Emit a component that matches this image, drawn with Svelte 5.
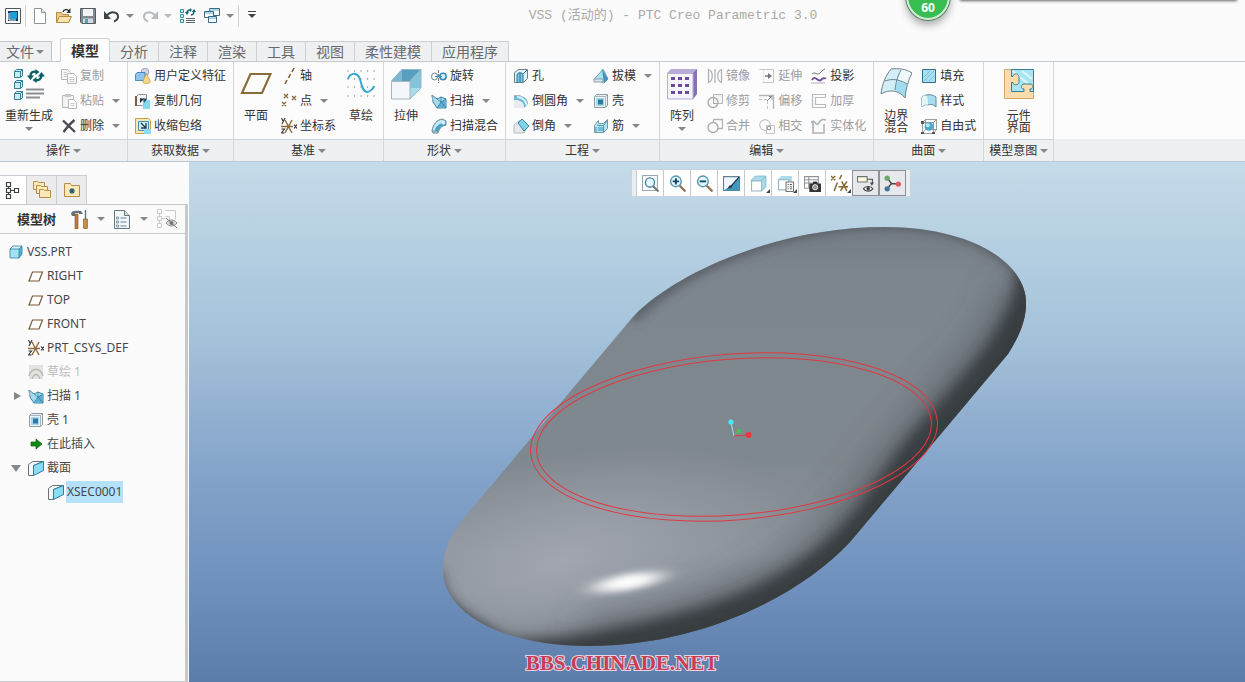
<script>
  const icons = {
    app: '<path d="M.5.5h15v15H.5z" fill="#fff" stroke="#4d5660"/><path d="M3 3h10v10H3z" fill="#173f66"/><path d="M6 4h6v6l-1 1H5V5z" fill="#1c9ed6"/><path d="M4 5v7h7" fill="none" stroke="#e8f6fc"/>',
    new: '<path d="M2.500.5h7l4 4v11h-11z" fill="#fff" stroke="#8c9298"/><path d="M9.500.5v4h4" fill="#e6e9eb" stroke="#8c9298"/>',
    open: '<path d="M.5 14.500v-10h5l1 2h6v8z" fill="#e9c98c" stroke="#b58b42"/><path d="M.5 14.500l3-6h12l-3 6z" fill="#fbe2ae" stroke="#b58b42"/><path d="M7 4c1-3 4-3 6-1" fill="none" stroke="#333" stroke-width="1.500"/><path d="M14.500 0v5h-4z" fill="#333"/>',
    save: '<path d="M.5.5h15v15H2l-1.500-1.500z" fill="#828a90" stroke="#565d63"/><path d="M3 1h10v7H3z" fill="#f1f3f4"/><path d="M3 10.500h10V15H3z" fill="#d5dade"/><path d="M5 11h3v4H5z" fill="#4aa4c6"/>',
    undo: '<path d="M3 7.500c4-5 11-3.500 11 1 0 2-1.500 4-4 5" fill="none" stroke="#3c4348" stroke-width="2"/><path d="M0 3v8h7z" fill="#3c4348"/>',
    redo: '<path d="M13 7.500c-4-5-11-3.500-11 1 0 2 1.500 4 4 5" fill="none" stroke="#b8bbbd" stroke-width="2"/><path d="M16 3v8H9z" fill="#b8bbbd"/>',
    regen: '<g fill="#d9f1f8" stroke="#3e8dab"><path d="M.5 1.500h3v3h-3zM.5 6.500h3v3h-3zM.5 11.500h3v3h-3z"/></g><path d="M6 10.500h9M6 12.500h9M6 14.500h9" stroke="#5d666d"/><path d="M7 5c0-3 2-3 3-3M14 3c0 3-2 4-3 4" fill="none" stroke="#0c6672" stroke-width="1.500"/><path d="M5 4h4L7 7zM12 4h4l-2-3zM10 0v4l2-2z" fill="#0c6672"/>',
    windows: '<g fill="#fff" stroke="#396a86"><path d="M5.500.5h10v7h-10z"/><path d="M.5 3.500h9v6h-9z"/><path d="M4.500 8.500h8v6h-8z"/></g><path d="M5 2h10M1 5h8M5 10h7" stroke="#5baccf" stroke-width="1"/>',
    regenBig: '<g fill="#c4edf7" stroke="#357e9a"><path d="M1.500 3.500l2-2h6v6l-2 2h-6zM1.500 14.500l2-2h6v6l-2 2h-6zM1.500 25.500l2-2h6v6l-2 2h-6z"/></g><path d="M1.500 3.500h6v6M7.500 3.500l2-2M1.500 14.500h6v6M7.500 14.500l2-2M1.500 25.500h6v6M7.500 25.500l2-2" fill="none" stroke="#357e9a"/><path d="M13 21.500h18M13 25.500h18M13 29.500h14" stroke="#8b8f93" stroke-width="2"/><path d="M17.500 8c0-4 3-5 6-4M28.500 7c0 4-3 6-6 5" fill="none" stroke="#0c5f6a" stroke-width="2.400"/><path d="M14 7.500h7l-3.500 4.500zM25 8.500h7l-3.500-4.500zM22.500 1v6l4-3zM23.500 9v6l-4-3z" fill="#0c5f6a"/>',
    copy: '<g fill="#fafafa" stroke="#b5b8ba"><path d="M.5 1.500h6l3 3v7h-9z"/><path d="M6.500 5.500h6l3 3v7h-9z"/></g><path d="M2.500 4.500h3M2.500 6.500h4M2.500 8.500h4M8.500 9.500h4M8.500 11.500h5M8.500 13.500h5" stroke="#c5c7c9"/>',
    paste: '<path d="M1.500 2.500h11v12h-11z" fill="#f4f4f4" stroke="#b5b8ba"/><path d="M4 1h6v3H4z" fill="#c5c7c9"/><path d="M7.500 6.500h5l3 3v6h-8z" fill="#fff" stroke="#b5b8ba"/><path d="M9.500 10.500h4M9.500 12.500h4" stroke="#c5c7c9"/>',
    del: '<path d="M2 2.500L14 14M13.500 2C9 5.500 6 9.500 2.500 14" fill="none" stroke="#484b50" stroke-width="2.400"/>',
    udf: '<circle cx="10" cy="4" r="3.800" fill="#d3d3e8" stroke="#8f90b8" stroke-width=".8"/><path d="M.5 6.500l1.500-2h8v6l-1.500 2h-8z" fill="#8ec5ee" stroke="#3677aa" stroke-width=".8"/><path d="M11.500 5.500l4 8.500c-2 2-6 2-8 0z" fill="#f5d78d" stroke="#c29a3d" stroke-width=".8"/>',
    copyGeom: '<path d="M1.500 3.500l2-2h8v9l-2 2h-8z" fill="#f2f4f5" stroke="#8a9197"/><path d="M1 3v10" stroke="#7c5b46" stroke-width="2"/><path d="M5 5v5l4-4z" fill="#25303a"/><path d="M8 7h7v9H8z" fill="#86d8ee"/><path d="M8 5l4 1-3 4z" fill="#2d4d66"/>',
    shrink: '<path d="M.5.5h13l2 2v11l-3 2H.5z" fill="#fbe7b4" stroke="#c9a048"/><path d="M3.500 3.500h10v9h-10z" fill="#cdeff8" stroke="#3d8fb4"/><path d="M6 5l5 5M11 5v5H6" fill="none" stroke="#27384a" stroke-width="1.300"/><path d="M9 11h7v5H9z" fill="#8edcf2"/>',
    plane: '<path d="M10.500 6h20l-8.500 19h-20z" fill="none" stroke="#8a6c3a" stroke-width="2.200"/>',
    axis: '<path d="M13 0l-2 4M9.500 6l-2 4M6 12l-2 4" stroke="#7c623a" stroke-width="1.600"/>',
    points: '<path d="M3 1l4 4M7 1L3 5M11 3l4 4M15 3l-4 4M1 9l4 4M5 9l-4 4" stroke="#8a6c3a" stroke-width="1.400"/>',
    csys: '<path d="M0 8.500h12M4 2l7 13M11 2L4 15" fill="none" stroke="#8a6c3a" stroke-width="1.400"/><path d="M.500 0l1.500 3M4 0L1 6M.500 11h3l-3 4h3M13 6.500l3 4M16 6.500l-3 4" fill="none" stroke="#333" stroke-width="1.100"/>',
    sketch: '<path d="M3 3h.1M9.500 3h.1M16 3h.1M22.500 3h.1M29 3h.1M3 11h.1M9.500 11h.1M16 11h.1M22.500 11h.1M29 11h.1M3 19h.1M9.500 19h.1M16 19h.1M22.500 19h.1M29 19h.1M3 28h.1M9.500 28h.1M16 28h.1M22.500 28h.1M29 28h.1" stroke="#666" stroke-width="1" stroke-linecap="square"/><path d="M3 11C5 5 11 4 14 9c3 5 2 14 8 15 3 0 6-3 7-6" fill="none" stroke="#3aa5cf" stroke-width="2"/>',
    extrude: '<path d="M1 13L12 1h19L20 13z" fill="#7cb8d2"/><path d="M20 13L31 1v19L20 31z" fill="#a8dcea"/><path d="M12 1v19h19V1z" fill="#4f9dc0" opacity=".4"/><path d="M12 1h19L12 20z" fill="#4590b4" opacity=".5"/><path d="M1.500 13.500H20V31H1.500z" fill="#f3f7f9" stroke="#a9b4bc"/><path d="M1.500 13L12 1.500h19V20L20 31M20 13L31 1.500" fill="none" stroke="#8fb9cb"/>',
    revolve: '<ellipse cx="3.500" cy="8.500" rx="3" ry="3.500" fill="#fff" stroke="#6a7f8c"/><circle cx="12" cy="8.500" r="3.200" fill="#d5effb" stroke="#3b86b5" stroke-width="1.500"/><path d="M7.500 2v13" stroke="#7b7b7b" stroke-dasharray="3 1"/><path d="M4 8.500h7" stroke="#3b86b5"/>',
    sweep: '<path d="M1 2l5 4 4-2 5 2v9H6L2 9z" fill="#a5dbed" stroke="#3e86a8"/><path d="M6 15l4-6 5-3v9z" fill="#5eafd0"/><path d="M6 6l4 3 5-3M10 9l-4 6M10 9l5 6M10 4v5" fill="none" stroke="#2c7398" stroke-width=".7"/><path d="M1 2l1 7" stroke="#9ab"/>',
    sweepBlend: '<path d="M1 13C2 6 6 2 11 1l4 2v4C10 8 8 11 7 15H2z" fill="#c2e8f4" stroke="#5e8294"/><path d="M4 12C5 8 8 6 12 5l3-1v3C10 8 8 11 7 14z" fill="#4f9fc4"/><circle cx="12.500" cy="5" r="1.500" fill="#e6f7fc"/><path d="M2 13h5" stroke="#5e8294"/>',
    hole: '<path d="M1.500 4.500l4-3h9v9l-4 4h-9z" fill="#dff3f9" stroke="#66818e"/><path d="M4 14V7c0-3 6-3 6 0v7" fill="#7cc5de" stroke="#2a7597"/><path d="M7 5v9M10 6l4-4" stroke="#2a7597"/>',
    round: '<path d="M1 3h6c5 0 8 4 8 8l-4 4c0-5-3-8-10-8z" fill="#6db8d8"/><path d="M1 7c6 0 10 2 10 8H1z" fill="#e7ecef"/><path d="M1 2.500h6l8 7" fill="none" stroke="#a9b7be"/><path d="M4 4c4 0 8 3 10 8" fill="none" stroke="#d8f2fb" stroke-width="2"/>',
    chamfer: '<path d="M1 7l6-5 8 6-4 7H1z" fill="#e6eaed" stroke="#b4bcc1"/><path d="M5 5l4-4 7 7-5 5z" fill="#83d3e8" stroke="#378aa9"/><path d="M11 13v2" stroke="#b4bcc1"/>',
    draft: '<path d="M1 11l5-5 4-5 5 10-4 4z" fill="#a9dfee" stroke="#6fa5bb"/><path d="M9 1l6 10-4 4z" fill="#448fbb"/><path d="M1 11h9v3H1z" fill="#dbe6ea" stroke="#8ba0ab"/>',
    shell: '<path d="M1.500 3.500l2-2h11v11l-2 2h-11z" fill="#eef2f4" stroke="#8f9ba2"/><path d="M3 5h8v8H3z" fill="#a6d8ec"/><path d="M5 6.500h5v5H5z" fill="#2f79a8"/><path d="M1.500 3.500h11v11M12.500 3.500l2-2" fill="none" stroke="#a9b3b9"/>',
    rib: '<path d="M1.500 7.500l4-5v3h5l4-4v9l-4 4h-9z" fill="#b2e6f3" stroke="#6b9bb0"/><path d="M4.500 7.500h6v7M10.500 7.500l4-5M3 9v5" fill="none" stroke="#5b90a7"/><path d="M5 9h5v4H5z" fill="#69bddb"/>',
    pattern: '<path d="M1 5l4-4h26v25l-4 5z" fill="#b8add8"/><path d="M27 5l4-4v25l-4 5z" fill="#8571b6"/><path d="M1.500 5.500H27V31H1.500z" fill="#f6f4fb" stroke="#b8add8"/><g fill="#6d4b9b"><path d="M5 9h4v3H5zM12 9h4v3h-4zM19 9h4v3h-4zM5 16h4v3H5zM12 16h4v3h-4zM19 16h4v3h-4zM5 23h4v3H5zM12 23h4v3h-4zM19 23h4v3h-4z"/></g>',
    mirror: '<path d="M1.500 1.500c5 2 5 11 0 13zM14.500 1.500c-5 2-5 11 0 13zM8 1v14" fill="none" stroke="#b0b4b7" stroke-width="1.300"/>',
    extend: '<path d="M.5 1.500h14v13H3.500" fill="none" stroke="#c3c6c8"/><path d="M4.500 1.500v13" stroke="#d4d6d8" stroke-dasharray="2 1"/><path d="M6 8h3" stroke="#777" stroke-width="1.500"/><path d="M9 5v6l4-3z" fill="#777"/>',
    project: '<path d="M1 6c3-3 5 2 8-1s3-3 5-4" fill="none" stroke="#777"/><path d="M1 12c3-6 6 3 9 0 2-3 3-1 5-2" fill="none" stroke="#6d4b9b" stroke-width="1.800"/><path d="M0 15h14" stroke="#b9a9cf"/>',
    trim: '<path d="M6.500 1.500h9v9h-9z" fill="#f4f4f4" stroke="#b4b7b9"/><circle cx="6" cy="9.500" r="5" fill="none" stroke="#a9acae" stroke-width="1.400"/><path d="M6.500 6v4.500H11" fill="none" stroke="#a9acae"/>',
    offset: '<path d="M0 2.500h14.500V16" fill="none" stroke="#b4b7b9" stroke-width="1.300"/><path d="M0 6.500h8.500V16" fill="none" stroke="#c3c6c8" stroke-dasharray="3 2"/><path d="M8 8l5-5M10 3.500h3v3" fill="none" stroke="#8c8f91"/>',
    thicken: '<path d="M14 1.500H1.500v13H15M14 4.500H4.500v7H15M14.500 1v3.500M14.500 11v4" fill="none" stroke="#b9bcbe" stroke-width="1.200"/>',
    merge: '<path d="M6.500 1.500h9v9H11M6.500 5V1.500" fill="none" stroke="#b0b3b5" stroke-width="1.300"/><circle cx="6" cy="9.500" r="5" fill="none" stroke="#a9acae" stroke-width="1.400"/>',
    intersect: '<circle cx="6" cy="7" r="5.300" fill="none" stroke="#b4b7b9"/><path d="M7.500 7.500h8v8h-8z" fill="none" stroke="#c3c6c8"/><circle cx="10" cy="10" r="1.800" fill="#fff" stroke="#8c8f91"/>',
    solidify: '<path d="M2 4v11h11V6M0 5c3-5 5 3 7 1 3-5 5-5 8-4" fill="none" stroke="#b0b3b5" stroke-width="1.600"/>',
    boundary: '<path d="M11 1c8-1 15 0 21 4-4 7-6 16-7 25-6-8-16-9-24-4C2 16 6 7 11 1z" fill="#d3eef7"/><path d="M21 1c4 1 8 2 11 4l-5 11c-3-2-6-3-9-4z" fill="#eef9fc"/><path d="M18 12c3 1 6 2 9 4l-2 14c-2-3-6-6-10-8z" fill="#9fdcee"/><path d="M11 1c8-1 15 0 21 4-4 7-6 16-7 25-6-8-16-9-24-4C2 16 6 7 11 1zM5 13c8-3 16-1 22 3M21 2c-4 7-5 13-6 20" fill="none" stroke="#72838c"/>',
    fill: '<path d="M1.500 1.500h13v13h-13z" fill="#a7def0" stroke="#2f6f8f"/><path d="M3 9l6-6M3 13L13 3M8 13l5-5" stroke="#7cc4dc"/>',
    style: '<path d="M1 4c4-3 10-3 14 0v10c-3-3-6-3-8-2-2-1-4 0-6 2z" fill="#a7def0" stroke="#66869a"/><path d="M1 4c4-3 6-2 6 8-2-1-4 0-6 2z" fill="#e6f7fb"/>',
    freestyle: '<path d="M1.500 4.500l3-3h11v10l-3 4h-11zM1.500 4.500h11v11M12.500 4.500l3-3M4.500 1.500v10h11M4.500 11.500l-3 4" fill="none" stroke="#707980" stroke-width=".7"/><circle cx="8" cy="8.500" r="4.300" fill="#4aa9cc"/><circle cx="6.800" cy="7.200" r="2" fill="#c0eaf5"/><path d="M0 3h3v3H0zM11 14h3v2h-3zM0 14h3v2H0z" fill="#555"/>',
    component: '<path d="M1.500 1.500h29v29h-29z" fill="#fbdcae" stroke="#d3a765"/><path d="M8.500 1.500h22v22h-22z" fill="#a9e4f2" stroke="#347f9a"/><path d="M9.500 3l16 13M19 3l10 8" stroke="#d9f5fb" stroke-width="2"/><path d="M8 8.500h2c0-3 5-4 6 0v6c-1 3-6 3-6 0H8z" fill="#fbdcae"/><path d="M8.500 8.500H10c0-3 5-4 6 0v6c-1 3-6 3-6 0H8.500" fill="none" stroke="#347f9a"/><path d="M21 24v-3c-4 0-3-5 0-5h6c4 0 4 5 0 5v3z" fill="#fbdcae"/><path d="M21 23.500V21c-4 0-3-5 0-5h6c4 0 4 5 0 5v2.500" fill="none" stroke="#347f9a"/>',
    tree: '<path d="M1.500.5h4v4h-4zM1.500 6.500h4v4h-4zM1.500 12.500h4v4h-4zM9.500 6.500h4v4h-4zM3.500 4.500v2M3.500 10.500v2M5.500 8.500h4" fill="none" stroke="#3b4045" stroke-width="1.200"/>',
    folders: '<g fill="#fce8b9" stroke="#b88d45"><path d="M.5 8.500v-8h4l1 1h6v7z"/><path d="M3.500 12.500v-8h4l1 1h6v7z"/><path d="M6.500 16.500v-8h4l1 1h6v7z"/></g>',
    favorites: '<path d="M.5 14.500v-13h6l1 2h8v11z" fill="#fce8b9" stroke="#b88d45"/><path d="M8 6v6M5 9h6M6 7l4 4M10 7l-4 4" stroke="#1c6070" stroke-width="1.100"/>',
    tools: '<path d="M0 4c0-3 3-4 10-3l2 3H8V3H4v3H1z" fill="#66727b"/><path d="M4 4h3v15H4z" fill="#b97e3e" stroke="#83521f" stroke-width=".6"/><path d="M14.500 0v9" stroke="#66727b" stroke-width="1.400"/><path d="M12.500 9h4v9l-1 1h-2l-1-1z" fill="#c58d4b" stroke="#83521f" stroke-width=".6"/>',
    list: '<path d="M.5.5h10l5 5v13H.5z" fill="#f2f6f8" stroke="#667782"/><path d="M10.500.5v5h5" fill="#d2dde3" stroke="#667782"/><path d="M2.500 7h2v2h-2zM2.500 11h2v2h-2zM2.500 15h2v2h-2z" fill="none" stroke="#66899b" stroke-width=".8"/><path d="M6.500 8h6M6.500 12h6M6.500 16h6" stroke="#66899b"/>',
    treeHidden: '<path d="M.5.5h4v4h-4zM.5 7.500h4v4h-4zM.5 14.500h4v4h-4zM8.500 7.500h4v4M2.500 4.500v3M2.500 11.500v3M4.500 9.500h4M8.500 1.500h10v9" fill="none" stroke="#c8cacc"/><path d="M9 14c3-4 8-4 11 0-3 4-8 4-11 0z" fill="#ddd" stroke="#888"/><circle cx="14.500" cy="14" r="2" fill="#777"/><path d="M9 9l11 10" stroke="#777"/>',
    part: '<path d="M2 5l3-3h9v8l-3 4H2z" fill="#a0e3f4"/><path d="M11 5l3-3v8l-3 4z" fill="#52b5d5"/><path d="M2 5l3-3h9l-3 3z" fill="#d8f6fc"/><path d="M2 5l3-3h9v8l-3 4H2zM2 5h9v9M11 5l3-3" fill="none" stroke="#337e9a" stroke-width=".8"/>',
    datum: '<path d="M4.500 4h10l-3.500 9H1z" fill="#fff" stroke="#755b3a" stroke-width="1.200"/>',
    sketchOff: '<path d="M1 1h14v14H1z" fill="#e3e4e2"/><path d="M1 12c3-9 11-9 14 0M4 15c2-6 6-6 8 0" fill="none" stroke="#b9bbae" stroke-width="1.400"/>',
    insert: '<path d="M3 6h5V3l6 5-6 5v-3H3z" fill="#128a12" stroke="#0a5d0a" stroke-width=".7"/>',
    section: '<path d="M.5 4.500l4-3h11l-10 4v10h-5z" fill="#f6f9fa" stroke="#66727a"/><path d="M5.500 5.500l10-4v9l-10 5z" fill="#8adcf5" stroke="#357c9c"/>',
    zoomFit: '<path d="M.5.5h14v14H.5z" fill="#fff" stroke="#9aa7b0"/><circle cx="7.500" cy="7" r="4.300" fill="#e7f6fb" stroke="#3f89a8" stroke-width="1.300"/><path d="M10.500 10.500l5 5" stroke="#777" stroke-width="2"/>',
    zoomIn: '<circle cx="6.500" cy="6" r="5" fill="#e7f6fb" stroke="#4f94b0" stroke-width="1.300"/><path d="M10 10l5.500 5.500" stroke="#8c7455" stroke-width="2"/><path d="M3.500 6h6M6.500 3v6" stroke="#0d4b68" stroke-width="1.800"/>',
    zoomOut: '<circle cx="6.500" cy="6" r="5" fill="#e7f6fb" stroke="#4f94b0" stroke-width="1.300"/><path d="M10 10l5.500 5.500" stroke="#8c7455" stroke-width="2"/><path d="M3.500 6h6" stroke="#0d4b68" stroke-width="1.800"/>',
    repaint: '<path d="M.5 1.500h15v13H.5z" fill="#eef8fb" stroke="#5d8397"/><path d="M15 2v12H1l7-4z" fill="#3c9abf"/><path d="M15 2L8 10" stroke="#234" stroke-width="1.200"/><path d="M9 9l-3 1-2 3 4-1z" fill="#334"/>',
    display: '<path d="M1 5l4-4h10v10l-4 4H1z" fill="#a8dcea"/><path d="M1.500 5.500h9.500V15H1.500z" fill="#fff" stroke="#93b6c4"/><path d="M1 5l4-4h10v10l-4 4M11 5l4-4" fill="none" stroke="#7fb6ca" stroke-width=".8"/>',
    saved: '<path d="M1 4l3-3h10v9l-3 4H1z" fill="#a8dcea"/><path d="M1.500 4.500H11V14H1.500z" fill="#fff" stroke="#93b6c4"/><path d="M8.500 6.500h7v9h-7z" fill="#fff" stroke="#777"/><path d="M10 9h1M12 9h2M10 11h1M12 11h2M10 13h1M12 13h2" stroke="#555"/>',
    camera: '<path d="M.5 1.500h13v11H.5zM.5 4.500h13M.5 7.500h13M4.500 1.500v11" fill="#fff" stroke="#909598"/><path d="M5 8h3l1-2h3l1 2h3v8H5z" fill="#333"/><circle cx="10.500" cy="11.500" r="2.500" fill="#999" stroke="#fff" stroke-width=".7"/>',
    datums: '<path d="M0 1l4 4M4 1L0 5M10 0L8 4M6 7l-3 8M7 11h9M10 6l5 9M15 6l-6 9" fill="none" stroke="#82652f" stroke-width="1.400"/>',
    annotation: '<path d="M.5 1.500h9v5h-9z" fill="#fff8dc" stroke="#6d7478"/><path d="M9.500 4h5v4" fill="none" stroke="#4a5055"/><path d="M12 7h4l-2 3z" fill="#4a5055"/><path d="M6 13c2-3 7-3 9 0-2 3-7 3-9 0z" fill="#fff" stroke="#333"/><circle cx="10.500" cy="13" r="1.600" fill="#333"/>',
    spin: '<path d="M3 3l4 5M7 8l6 .500M7 8l-4 5" stroke="#444" stroke-width="1.300"/><circle cx="3" cy="3" r="2.500" fill="#69a96b"/><circle cx="13.500" cy="8.500" r="2.500" fill="#db5a63"/><circle cx="3" cy="13" r="2.500" fill="#46789f"/>'
  };

  const tabs = ['模型', '分析', '注释', '渲染', '工具', '视图', '柔性建模', '应用程序'];

  const big = (icon, label, menu = false) => ({ big: true, icon, label, menu });
  const stack = (...items) => ({ items: items.map(([icon, label, menu, off]) => ({ icon, label, menu, off })) });

  const groups = [
    { name: '操作', cols: [big('regenBig', '重新生成', true), stack(['copy', '复制', 0, 1], ['paste', '粘贴', 1, 1], ['del', '删除', 1])] },
    { name: '获取数据', cols: [stack(['udf', '用户定义特征'], ['copyGeom', '复制几何'], ['shrink', '收缩包络'])] },
    { name: '基准', cols: [big('plane', '平面'), stack(['axis', '轴'], ['points', '点', 1], ['csys', '坐标系']), big('sketch', '草绘')] },
    { name: '形状', cols: [big('extrude', '拉伸'), stack(['revolve', '旋转'], ['sweep', '扫描', 1], ['sweepBlend', '扫描混合'])] },
    { name: '工程', cols: [stack(['hole', '孔'], ['round', '倒圆角', 1], ['chamfer', '倒角', 1]), stack(['draft', '拔模', 1], ['shell', '壳'], ['rib', '筋', 1])] },
    {
      name: '编辑',
      cols: [
        big('pattern', '阵列', true),
        stack(['mirror', '镜像', 0, 1], ['trim', '修剪', 0, 1], ['merge', '合并', 0, 1]),
        stack(['extend', '延伸', 0, 1], ['offset', '偏移', 0, 1], ['intersect', '相交', 0, 1]),
        stack(['project', '投影'], ['thicken', '加厚', 0, 1], ['solidify', '实体化', 0, 1])
      ]
    },
    { name: '曲面', cols: [big('boundary', '边界\n混合'), stack(['fill', '填充'], ['style', '样式'], ['freestyle', '自由式'])] },
    { name: '模型意图', cols: [big('component', '元件\n界面')] }
  ];

  const tree = [
    { icon: 'part', label: 'VSS.PRT', level: 0 },
    { icon: 'datum', label: 'RIGHT', level: 1 },
    { icon: 'datum', label: 'TOP', level: 1 },
    { icon: 'datum', label: 'FRONT', level: 1 },
    { icon: 'csys', label: 'PRT_CSYS_DEF', level: 1 },
    { icon: 'sketchOff', label: '草绘 1', level: 1, dim: true },
    { icon: 'sweep', label: '扫描 1', level: 1, twist: 'closed' },
    { icon: 'shell', label: '壳 1', level: 1 },
    { icon: 'insert', label: '在此插入', level: 1 },
    { icon: 'section', label: '截面', level: 1, twist: 'open' },
    { icon: 'section', label: 'XSEC0001', level: 2 }
  ];

  const viewTools = [
    ['zoomFit', '重新调整'], ['zoomIn', '放大'], ['zoomOut', '缩小'], ['repaint', '重画'],
    ['display', '显示样式', true], ['saved', '已保存方向', true], ['camera', '视图管理器'],
    ['datums', '基准显示过滤器', true], ['annotation', '注释显示'], ['spin', '旋转中心']
  ];

  let activeTab = $state('模型');
  let selected = $state('XSEC0001');
  let pressed = $state(['annotation', 'spin']);

  function toggle(name) {
    pressed = pressed.includes(name) ? pressed.filter((n) => n !== name) : [...pressed, name];
  }
</script>

{#snippet icon(name, size = 16, box = size)}
  <svg class="icon" width={size} height={size} viewBox="0 0 {box} {box}" aria-hidden="true">{@html icons[name]}</svg>
{/snippet}

<div class="window">
  <header class="titlebar">
    <div class="quick">
      <button aria-label="窗口">{@render icon('app')}</button>
      <span class="rule"></span>
      <button aria-label="新建">{@render icon('new')}</button>
      <button aria-label="打开">{@render icon('open')}</button>
      <button aria-label="保存">{@render icon('save')}</button>
      <button aria-label="撤消">{@render icon('undo')}<i class="caret"></i></button>
      <button class="off" aria-label="重做">{@render icon('redo')}<i class="caret"></i></button>
      <button aria-label="重新生成">{@render icon('regen')}</button>
      <button aria-label="窗口列表">{@render icon('windows')}<i class="caret"></i></button>
      <span class="rule"></span>
      <button aria-label="自定义"><i class="caret custom"></i></button>
    </div>
    <h1>VSS (活动的) - PTC Creo Parametric 3.0</h1>
    <span class="badge">60</span>
    <span class="overhang"></span>
  </header>

  <nav class="tabs">
    <button class="file">文件<i class="caret"></i></button>
    <div class="tablist" role="tablist">
      {#each tabs as tab}
        <button role="tab" aria-selected={tab === activeTab} class:active={tab === activeTab} onclick={() => (activeTab = tab)}>{tab}</button>
      {/each}
    </div>
  </nav>

  <section class="ribbon">
    {#each groups as group}
      <div class="group">
        <div class="tools">
          {#each group.cols as col}
            {#if col.big}
              <button class="big">
                {@render icon(col.icon, 32)}
                <span>{col.label}</span>
                {#if col.menu}<i class="caret"></i>{/if}
              </button>
            {:else}
              <div class="stack">
                {#each col.items as item}
                  <button class="small" disabled={!!item.off}>
                    {@render icon(item.icon)}
                    <span>{item.label}</span>
                    {#if item.menu}<i class="caret"></i>{/if}
                  </button>
                {/each}
              </div>
            {/if}
          {/each}
        </div>
        <button class="name">{group.name}<i class="caret"></i></button>
      </div>
    {/each}
    <div class="rest"></div>
  </section>

  <main>
    <aside>
      <div class="navtabs">
        <button class="active" aria-label="模型树">{@render icon('tree', 17)}</button>
        <button aria-label="文件夹浏览器">{@render icon('folders', 18)}</button>
        <button aria-label="收藏夹">{@render icon('favorites')}</button>
      </div>
      <div class="panel">
        <div class="panelbar">
          <h2>模型树</h2>
          <button aria-label="设置">{@render icon('tools', 19)}<i class="caret"></i></button>
          <button aria-label="显示">{@render icon('list', 19)}<i class="caret"></i></button>
          <button aria-label="隐藏">{@render icon('treeHidden', 21)}</button>
        </div>
        <ul>
          {#each tree as node}
            <li class="level{node.level}">
              <span class="twist {node.twist ?? ''}"></span>
              <button class="node" class:dim={node.dim} class:selected={selected === node.label} onclick={() => (selected = node.label)}>
                {@render icon(node.icon)}<span>{node.label}</span>
              </button>
            </li>
          {/each}
        </ul>
      </div>
    </aside>

    <div class="canvas">
      <svg class="scene" viewBox="189 162 1056 520" role="img" aria-label="VSS">
        <defs>
          <linearGradient id="body" x1="0" y1="227" x2="0" y2="646" gradientUnits="userSpaceOnUse">
            <stop offset="0" stop-color="#747c84" />
            <stop offset=".12" stop-color="#7d868e" />
            <stop offset=".55" stop-color="#80888f" />
            <stop offset=".78" stop-color="#8e959d" />
            <stop offset="1" stop-color="#747b82" />
          </linearGradient>
          <radialGradient id="glow" cx="0" cy="0" r="1" gradientUnits="userSpaceOnUse" gradientTransform="translate(560 562) rotate(-14) scale(240 105)">
            <stop offset="0" stop-color="#a1a6b0" />
            <stop offset=".4" stop-color="#9aa0aa" stop-opacity=".8" />
            <stop offset="1" stop-color="#9398a1" stop-opacity="0" />
          </radialGradient>
          <filter id="soft" x="-30%" y="-30%" width="160%" height="160%"><feGaussianBlur stdDeviation="7" /></filter>
          <filter id="wide" x="-30%" y="-30%" width="160%" height="160%"><feGaussianBlur stdDeviation="22" /></filter>
          <filter id="edge" x="-30%" y="-30%" width="160%" height="160%"><feGaussianBlur stdDeviation="6" /></filter>
          <filter id="spark" x="-50%" y="-150%" width="200%" height="400%"><feGaussianBlur stdDeviation="13 3" /></filter>
          <clipPath id="solid">
            <path d="M464 518L632 318C668 278 770 227 885 227C970 227 1026 262 1026 303C1026 322 1018 338 1008 354L850 542C800 596 700 646 588 646C500 646 443 612 443 570C443 550 450 535 464 518Z" />
          </clipPath>
        </defs>
        <g clip-path="url(#solid)">
          <rect x="440" y="224" width="590" height="426" fill="url(#body)" />
          <rect x="320" y="440" width="520" height="210" fill="url(#glow)" />
          <path d="M1045 290C1040 322 1028 345 1014 362L856 550C806 604 706 660 588 664" fill="none" stroke="#454b51" stroke-width="72" opacity=".75" filter="url(#wide)" />
          <path d="M1018 270Q1016 310 972 366L905 442L858 508C815 560 760 590 700 608C640 626 580 638 510 640L440 600L450 690H1060V250Z" fill="#393c41" filter="url(#soft)" />
          <path d="M632 318C668 278 770 222 885 222C975 222 1030 262 1031 303L1040 700H588C490 650 438 612 438 570" fill="none" stroke="#40454b" stroke-width="9" opacity=".8" filter="url(#edge)" />
          <ellipse cx="628" cy="582" rx="34" ry="8" fill="#fff" transform="rotate(-10 628 582)" filter="url(#spark)" />
        </g>
        <g fill="none" stroke="#e23840" stroke-width="1">
          <ellipse cx="734" cy="437" rx="204" ry="83" transform="rotate(-4.500 734 437)" />
          <ellipse cx="734" cy="437" rx="198" ry="78" transform="rotate(-4.500 734 437)" />
        </g>
        <path d="M734 436L731 423" stroke="#9be8f4" />
        <path d="M734 436L739 431" stroke="#48c95b" />
        <path d="M734 436L748 435" stroke="#e23840" />
        <circle cx="731" cy="422" r="2.600" fill="#40eaf6" />
        <circle cx="739" cy="431" r="2.200" fill="#45c24f" />
        <circle cx="748.500" cy="435" r="3" fill="#f23439" />
        <text x="622" y="670" text-anchor="middle" class="mark">BBS.CHINADE.NET</text>
      </svg>
      <div class="viewbar" role="toolbar" aria-label="图形工具栏">
        {#each viewTools as [name, label, menu]}
          <button aria-label={label} class:menu class:pressed={pressed.includes(name)} onclick={() => toggle(name)}>{@render icon(name, 17, 16)}</button>
        {/each}
      </div>
    </div>
  </main>
</div>

<style>
  :global(body) {
    margin: 0;
    background: #fbfbfb;
  }
  .window {
    display: flex;
    flex-direction: column;
    min-height: 100vh;
    color: #333;
    font: 12px/16px "Noto Sans", "Noto Sans CJK SC", sans-serif;
    overflow: hidden;
  }
  button {
    display: flex;
    align-items: center;
    margin: 0;
    padding: 0;
    border: 0;
    background: none;
    color: inherit;
    font: inherit;
    white-space: nowrap;
  }
  .icon {
    display: block;
    flex: none;
  }
  .caret {
    flex: none;
    border: 4px solid transparent;
    border-top-color: #85888b;
    border-bottom: 0;
  }

  .titlebar {
    position: relative;
    display: flex;
    align-items: center;
    height: 32px;
    margin-bottom: 6px;
  }
  .quick {
    display: flex;
    align-items: center;
    gap: 8px;
    padding-left: 5px;
  }
  .quick button {
    gap: 6px;
  }
  .quick .rule {
    width: 1px;
    height: 22px;
    margin: 0 -2px 0 -4px;
    background: #cfd1d3;
  }
  .quick .off .caret {
    border-top-color: #b9bcbe;
  }
  .quick .custom {
    position: relative;
    margin-left: 3px;
    border-top-color: #444;
  }
  .quick .custom::before {
    content: "";
    position: absolute;
    left: -4px;
    top: -7px;
    width: 8px;
    height: 1px;
    background: #444;
  }
  h1 {
    flex: 1;
    margin: 0 155px 0 0;
    color: #a9a9a9;
    font: 13px/16px "Liberation Mono", "Noto Sans CJK SC", monospace;
    text-align: center;
    white-space: nowrap;
  }
  .badge {
    position: absolute;
    right: 295px;
    top: -28px;
    width: 40px;
    height: 17px;
    padding-top: 27px;
    border: 2px solid #d3ead8;
    border-radius: 50%;
    background: #37bd52;
    box-shadow: 0 0 0 1px #4d8a5c, 0 5px 8px #0005;
    color: #fff;
    font: bold 12px/14px "Noto Sans", sans-serif;
    text-align: center;
  }
  .overhang {
    position: absolute;
    right: 8px;
    top: -6px;
    width: 277px;
    height: 6px;
    background: #999;
    box-shadow: 0 1px 3px #0009;
  }

  .tabs {
    display: flex;
    align-items: flex-end;
    gap: 8px;
    border-bottom: 1px solid #c3cbd2;
    color: #666a6e;
    font-size: 14px;
    line-height: 18px;
  }
  .tabs button {
    box-sizing: border-box;
    height: 20px;
    border: solid #ccd0d4;
    border-width: 1px 1px 0 0;
    background: #eff0f2;
  }
  .tabs .file {
    gap: 2px;
    padding: 0 7px 0 6px;
    border-color: #c2c6ca;
  }
  .tablist {
    display: flex;
    align-items: flex-end;
  }
  .tablist button {
    padding: 0 10px;
  }
  .tablist button.active {
    height: 24px;
    margin-bottom: -1px;
    border-left-width: 1px;
    border-radius: 3px 3px 0 0;
    background: #fdfdfd;
    color: #333;
    font-weight: bold;
  }

  .ribbon {
    display: flex;
    border-bottom: 1px solid #b9c7d3;
    background: #fcfcfc;
  }
  .group {
    display: flex;
    flex-direction: column;
    border-right: 1px solid #d3d8dc;
  }
  .tools {
    display: flex;
    flex: 1;
    justify-content: center;
    gap: 6px;
    padding: 2px 3px 0;
  }
  .big {
    flex-direction: column;
    box-sizing: border-box;
    min-width: 38px;
    padding: 4px 2px 0;
    line-height: 12px;
  }
  .big span {
    margin: 10px 0 5px;
    white-space: pre;
  }
  .stack {
    display: flex;
    flex-direction: column;
    gap: 1px;
  }
  .stack:first-child {
    padding-left: 4px;
  }
  .stack:last-child {
    padding-right: 4px;
  }
  .stack + .stack {
    margin-left: 3px;
  }
  .small {
    gap: 3px;
    height: 24px;
  }
  .small .caret {
    margin-left: 5px;
  }
  .small:disabled {
    color: #9b9ea1;
  }
  .name {
    justify-content: center;
    gap: 3px;
    height: 22px;
    padding: 0 5px;
    border-top: 1px solid #ccd3d9;
    background: #eff0f2;
  }
  .rest {
    flex: 1;
    background: linear-gradient(#fcfcfc, #fcfcfc) 0 0 / 100% calc(100% - 22px) no-repeat, #eff0f2;
  }

  main {
    display: flex;
    flex: 1;
  }
  aside {
    display: flex;
    flex: none;
    flex-direction: column;
    width: 189px;
    background: #fbfbfb;
  }
  .navtabs {
    display: flex;
    padding-top: 13px;
  }
  .navtabs button {
    box-sizing: border-box;
    justify-content: center;
    width: 30px;
    height: 29px;
    border: solid #c9ccd0;
    border-width: 1px 1px 0 0;
    background: #ececef;
  }
  .navtabs .active {
    width: 27px;
    background: #fff;
  }
  .panel {
    flex: 1;
    margin-right: 1px;
    border: solid #c6c8ca;
    border-width: 1px 3px 1px 0;
  }
  .panelbar {
    display: flex;
    align-items: center;
    gap: 9px;
    height: 28px;
    padding-left: 17px;
    border-bottom: 1px solid #c6c8ca;
  }
  .panelbar button {
    gap: 7px;
  }
  h2 {
    margin: 0 6px 0 0;
    font-size: 13px;
    line-height: 16px;
    font-weight: bold;
  }
  ul {
    margin: 0;
    padding: 6px 0;
    list-style: none;
  }
  li {
    display: flex;
    align-items: center;
    height: 24px;
  }
  .level0 {
    padding-left: 8px;
  }
  .level1 {
    padding-left: 12px;
  }
  .level2 {
    padding-left: 32px;
  }
  .twist {
    display: flex;
    justify-content: center;
    width: 16px;
  }
  .level0 .twist {
    display: none;
  }
  .twist.closed::before,
  .twist.open::before {
    content: "";
    border: 4px solid transparent;
    border-left: 7px solid #85888b;
    border-right: 0;
    margin-right: 6px;
  }
  .twist.open::before {
    border: 5px solid transparent;
    border-top: 7px solid #85888b;
    border-bottom: 0;
    margin-right: 8px;
  }
  .node {
    gap: 2px;
    color: #44484c;
  }
  .node span {
    padding: 3px 1px;
  }
  .node.dim {
    color: #bcbcbc;
  }
  .node.selected span {
    background: #b3e2fa;
  }

  .canvas {
    position: relative;
    flex: 1;
    display: flex;
    min-width: 0;
    background: linear-gradient(#c5dbea, #a4c2d9 34%, #83a3ca 60%, #6f90bc 82%, #5c7ca9);
  }
  .scene {
    width: 100%;
    height: 100%;
  }
  .mark {
    fill: #c53f59;
    stroke: #ecd5e2;
    stroke-width: 2px;
    paint-order: stroke;
    font: bold 21px "Liberation Serif", serif;
  }
  .viewbar {
    position: absolute;
    top: 7px;
    left: 442px;
    display: flex;
    padding: 0 4px;
    border: 1px solid #c9d4dc;
    background: #e9eef1;
  }
  .viewbar button {
    position: relative;
    box-sizing: border-box;
    justify-content: center;
    width: 27px;
    height: 26px;
    border-left: 1px solid #c3cbd1;
    background: #fff;
  }
  .viewbar .pressed {
    border: 1px solid #8b9299;
    background: #e6e8ec;
  }
  .viewbar .menu::after {
    content: "";
    position: absolute;
    right: 1px;
    bottom: 3px;
    border-left: 4px solid transparent;
    border-bottom: 4px solid #444;
  }
</style>
